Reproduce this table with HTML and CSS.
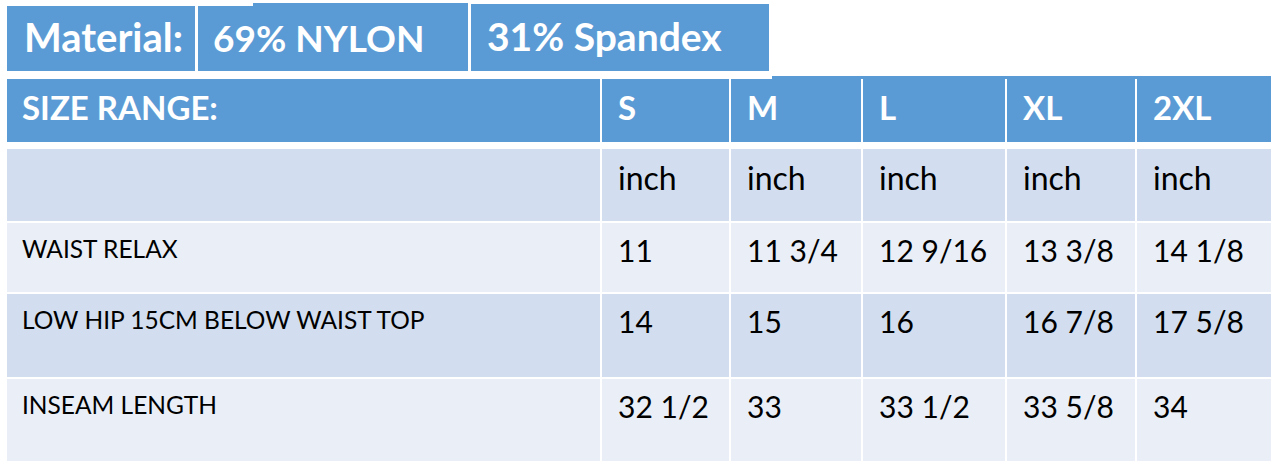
FILE: index.html
```html
<!DOCTYPE html>
<html lang="en">
<head>
  <meta charset="UTF-8">
  <meta name="viewport" content="width=device-width, initial-scale=1.0">
  <title>Size Chart</title>
  <link rel="stylesheet" href="styles.css">
</head>
<body>
  <div class="chart">
    <div class="material">
      <div class="tag tag-label">Material:</div>
      <div class="tag tag-nylon">69% NYLON</div>
      <div class="tag tag-spandex">31% Spandex</div>
    </div>

    <div class="row head">
      <div class="cell label">SIZE RANGE:</div>
      <div class="cell">S</div>
      <div class="cell">M</div>
      <div class="cell">L</div>
      <div class="cell">XL</div>
      <div class="cell">2XL</div>
    </div>

    <div class="body">
      <div class="row dark unit">
        <div class="cell label"></div>
        <div class="cell">inch</div>
        <div class="cell">inch</div>
        <div class="cell">inch</div>
        <div class="cell">inch</div>
        <div class="cell">inch</div>
      </div>
      <div class="row light waist">
        <div class="cell label">WAIST RELAX</div>
        <div class="cell">11</div>
        <div class="cell">11 3/4</div>
        <div class="cell">12 9/16</div>
        <div class="cell">13 3/8</div>
        <div class="cell">14 1/8</div>
      </div>
      <div class="row dark hip">
        <div class="cell label">LOW HIP 15CM BELOW WAIST TOP</div>
        <div class="cell">14</div>
        <div class="cell">15</div>
        <div class="cell">16</div>
        <div class="cell">16 7/8</div>
        <div class="cell">17 5/8</div>
      </div>
      <div class="row light inseam">
        <div class="cell label">INSEAM LENGTH</div>
        <div class="cell">32 1/2</div>
        <div class="cell">33</div>
        <div class="cell">33 1/2</div>
        <div class="cell">33 5/8</div>
        <div class="cell">34</div>
      </div>
    </div>
  </div>
</body>
</html>
```

FILE: styles.css
```css
body {
  margin: 0;
  background: #fff;
  font-family: Lato, "Open Sans", sans-serif;
  color: #000;
}

.chart {
  padding: 3px 0 0 7px;
  width: 1264px;
}

/* material tags */
.material {
  display: flex;
  align-items: flex-end;
  gap: 3px;
  height: 68px;
  margin-bottom: 8px;
}

.tag {
  position: relative;
  background: #5b9bd5;
  color: #fff;
  font-weight: 700;
  font-size: 37px;
  height: 65px;
  display: flex;
  align-items: center;
  padding: 0 0 3px 16px;
  box-sizing: border-box;
}

.tag-label {
  width: 188px;
  padding-left: 17px;
  font-size: 40px;
}

.tag-nylon {
  width: 270px;
  padding-left: 15px;
}

.tag-nylon::before {
  content: "";
  position: absolute;
  top: -3px;
  left: 55px;
  right: 0;
  height: 3px;
  background: #5b9bd5;
}

.tag-spandex {
  width: 298px;
  height: 67px;
  font-size: 39px;
}

/* table rows */
.row {
  display: grid;
  grid-template-columns: 593px 127px 130px 142px 128px 134px;
  column-gap: 2px;
}

.cell {
  padding-left: 16px;
  box-sizing: border-box;
}

.head {
  position: relative;
  height: 63px;
  margin-bottom: 7px;
}

.head::before {
  content: "";
  position: absolute;
  top: -3px;
  left: 765px;
  right: 0;
  height: 3px;
  background: #5b9bd5;
}

.head .cell {
  background: #5b9bd5;
  color: #fff;
  font-weight: 700;
  font-size: 33px;
  display: flex;
  align-items: center;
  padding-bottom: 7px;
}

.head .label {
  padding-left: 15px;
}

.body {
  display: flex;
  flex-direction: column;
  gap: 2px;
}

.body .cell {
  font-size: 30px;
  line-height: 1.2;
  padding-top: 9px;
}

.body .label {
  font-size: 24.5px;
  padding-left: 15px;
  padding-top: 11px;
}

.dark .cell {
  background: #d2deef;
}

.light .cell {
  background: #eaeff7;
}

.unit { height: 72px; }
.unit .cell { padding-top: 10px; font-size: 32px; }
.waist { height: 69px; }
.hip { height: 83px; }
.inseam { height: 82px; }
```
